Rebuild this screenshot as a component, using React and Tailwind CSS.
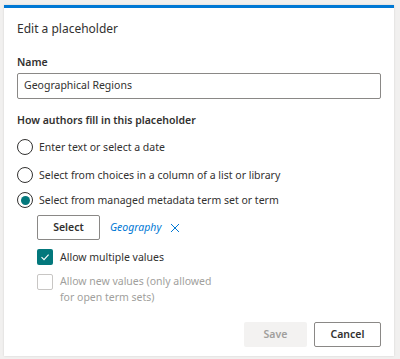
import React from "react";

const font = { fontFamily: '"Noto Sans", "Open Sans", sans-serif' };

function Radio({ checked, label, className = "" }) {
  return (
    <div className={"flex items-center gap-[6px] " + className}>
      <span className="w-[16px] h-[16px] rounded-full border border-[#323130] flex items-center justify-center shrink-0 bg-white">
        {checked && <span className="w-[9px] h-[9px] rounded-full bg-[#03787c]" />}
      </span>
      <span className="text-[10.5px] leading-[16px] text-[#323130]">{label}</span>
    </div>
  );
}

export default function App() {
  return (
    <div className="w-[400px] h-[359px] bg-[#f1f0ef] pl-[4px] pt-[5px] pr-[6px] pb-[3px]" style={font}>
      <div className="w-full h-full bg-white border-t-[3px] border-[#0078d4] shadow-[0_0_2px_rgba(0,0,0,0.12)] px-[13px] pt-[10px] flex flex-col">
        <div className="text-[12px] leading-[22px] text-[#323130]">Edit a placeholder</div>
        <div className="mt-[12px] text-[10.5px] leading-[20px] font-semibold text-[#323130]">Name</div>
        <div className="mt-[1px] h-[26px] border border-[#8a8886] rounded-[2px] flex items-center px-[6px] text-[10.5px] text-[#323130]">
          Geographical Regions
        </div>
        <div className="mt-[11px] text-[10.5px] leading-[20px] font-semibold text-[#323130]">How authors fill in this placeholder</div>
        <Radio className="mt-[9px]" label="Enter text or select a date" />
        <Radio className="mt-[12px]" label="Select from choices in a column of a list or library" />
        <Radio className="mt-[9px]" checked label="Select from managed metadata term set or term" />
        <div className="ml-[20px] mt-[7px] flex items-center">
          <div className="w-[63px] h-[25px] border border-[#8a8886] rounded-[2px] flex items-center justify-center text-[10.5px] font-semibold text-[#323130]">
            Select
          </div>
          <span className="ml-[10px] text-[10.5px] italic text-[#0078d4]">Geography</span>
          <svg className="ml-[9px]" width="10" height="10" viewBox="0 0 10 10">
            <path d="M1 1 L9 9 M9 1 L1 9" stroke="#0078d4" strokeWidth="1" fill="none" />
          </svg>
        </div>
        <div className="ml-[20px] mt-[9px] flex items-center gap-[7px]">
          <span className="w-[16px] h-[16px] rounded-[2px] bg-[#03787c] flex items-center justify-center">
            <svg width="10" height="10" viewBox="0 0 10 10">
              <path d="M1.5 5.2 L4 7.6 L8.6 2.6" stroke="white" strokeWidth="1.1" fill="none" />
            </svg>
          </span>
          <span className="text-[10.5px] leading-[16px] text-[#323130]">Allow multiple values</span>
        </div>
        <div className="ml-[20px] mt-[9px] flex items-start gap-[7px]">
          <span className="w-[16px] h-[16px] rounded-[2px] border border-[#c8c6c4] shrink-0" />
          <span className="text-[10.5px] leading-[16px] text-[#a19f9d] -mt-[1px]">
            Allow new values (only allowed<br />for open term sets)
          </span>
        </div>
        <div className="mt-auto mb-[9px] flex justify-end gap-[7px]">
          <div className="w-[63px] h-[25px] rounded-[2px] bg-[#f3f2f1] flex items-center justify-center text-[10.5px] font-semibold text-[#a19f9d]">
            Save
          </div>
          <div className="w-[67px] h-[25px] border border-[#8a8886] rounded-[2px] flex items-center justify-center text-[10.5px] font-semibold text-[#323130]">
            Cancel
          </div>
        </div>
      </div>
    </div>
  );
}
